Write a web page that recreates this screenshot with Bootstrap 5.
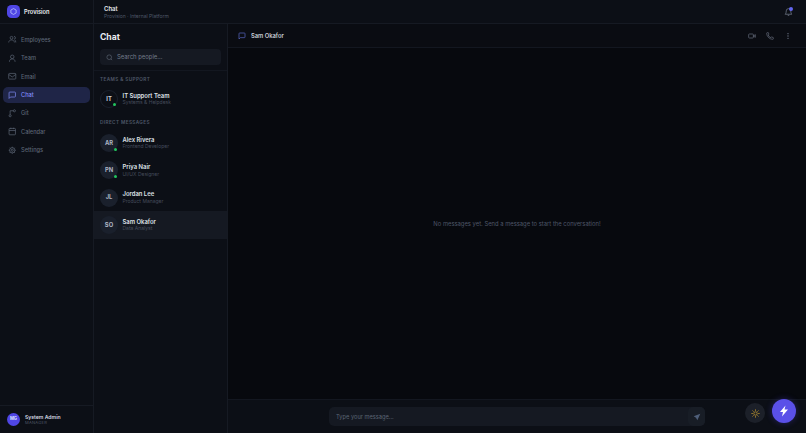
<!DOCTYPE html>
<html lang="en" data-bs-theme="dark">
<head>
<meta charset="utf-8">
<title>Provision Chat</title>
<link href="https://cdn.jsdelivr.net/npm/bootstrap@5.3.0/dist/css/bootstrap.min.css" rel="stylesheet">
<style>
html,body{height:100%;margin:0;background:#0a0d14;font-family:Inter,"Liberation Sans",sans-serif;overflow:hidden}
.shell{height:433px;width:806px}
.rail{width:94px;background:#0c0f16;border-right:1px solid #161a23;flex:none}
.brand{height:24px;padding-left:7px;gap:4px;border-bottom:1px solid #161a23;color:#eef0f5;font-size:5.7px;font-weight:600}
.brand-text{padding-top:1.5px}
.brand-mark{width:13px;height:13px;border-radius:4.5px;background:#4f46e5;color:#c7d2fe}
.rail-nav{padding:7.5px 3px;gap:2px}
.rail-link{height:16.4px;padding-left:5px;gap:4.5px;font-size:5.7px;color:#5b6474;border-radius:5px;text-decoration:none;font-weight:500}
.rail-link.is-on{background:#1f2547;color:#818cf8}
.rail-link svg{width:8.5px;height:8.5px;flex:none}
.rail-label{padding-top:1px}
.rail-foot{height:28px;padding-left:7px;gap:5px;border-top:1px solid #161a23}
.foot-av{width:13px;height:13px;border-radius:50%;background:#4f46e5;color:#dfe3ff;font-size:4.2px;font-weight:700}
.foot-name{font-size:5.1px;font-weight:600;color:#d5d8e0;line-height:6.5px;padding-top:1px}
.foot-role{font-size:4.1px;color:#505868;letter-spacing:.25px;line-height:6px}
.topbar{height:24px;background:#0c0f16;border-bottom:1px solid #161a23;padding:1px 13px 0 10px;flex:none}
.top-title{font-size:6px;font-weight:600;color:#e5e7ec;line-height:8px}
.top-sub{font-size:5px;color:#4f5869;line-height:7px}
.bell-wrap{width:9px;height:10px}
.bell-dot{position:absolute;top:0;right:0;width:4px;height:4px;border-radius:50%;background:#6366f1}
.people{width:134px;flex:none;background:#0c0f16;border-right:1px solid #161a23}
.people-head{padding:9px 6px 0;height:47px;border-bottom:1px solid #131720}
.people-title{font-size:8.6px;font-weight:700;color:#e8eaf0;line-height:9px;margin-bottom:7px}
.search-box{height:16px;background:#151922;border-radius:4px;padding-left:6px;gap:4px;font-size:5.9px;color:#737b8b}
.search-text{padding-top:1.5px}
.group-label{font-size:4.7px;font-weight:600;letter-spacing:.38px;color:#4f5869;padding:0 6px;line-height:6px}
.group-first{margin-top:4.5px;margin-bottom:4px}
.group-next{margin-top:6.7px;margin-bottom:4px}
.person{height:27.3px;padding-left:6px;gap:4.5px}
.person.is-on{background:#151922}
.person-av{width:18px;height:18px;border-radius:50%;background:#1a202c;color:#adb5c3;font-size:5.8px;font-weight:700;flex:none}
.person-av.ring{background:#0c0f16;border:1px solid #1a202c;color:#cbd0da}
.live{position:absolute;right:1.5px;bottom:1.5px;width:3px;height:3px;border-radius:50%;background:#22c55e}
.person-name{font-size:5.9px;font-weight:600;color:#dfe2e8;line-height:7.5px}
.person-role{font-size:5px;color:#454c5b;line-height:7px}
.convo{background:#07090e;min-width:0}
.convo-head{height:24px;padding:1px 14px 0 10px;border-bottom:1px solid #131720;background:#0a0c12;flex:none}
.convo-title{gap:5px}
.convo-name{font-size:5.8px;font-weight:600;color:#c9cdd6;padding-top:1px}
.convo-tools{gap:10px}
.empty-note{font-size:5.85px;color:#4e5668;padding-top:2px}
.composer{height:34px;border-top:1px solid #131720;background:#0c0f16;flex:none}
.msg-box{width:376px;height:19px;background:#151922;border-radius:5px;padding-left:7px;font-size:5.7px;color:#5b6474}
.msg-hint{padding-top:1.5px}
.send-btn{width:17px;height:19px;border-radius:5px;background:#181d26}
.theme-fab{position:absolute;right:41px;bottom:10px;width:20px;height:20px;border-radius:50%;background:#1c2029}
.bolt-fab{position:absolute;right:10px;bottom:10px;width:24px;height:24px;border-radius:50%;background:#5a50e8;box-shadow:0 0 6px rgba(80,70,229,.35)}
</style>
</head>
<body>
<div class="shell d-flex">
  <aside class="rail d-flex flex-column">
    <div class="brand d-flex align-items-center">
      <span class="brand-mark d-flex align-items-center justify-content-center"><svg width="7" height="7" viewBox="0 0 24 24" fill="none" stroke="currentColor" stroke-width="2.4"><path d="M12 2 21 7v10l-9 5-9-5V7z"/></svg></span>
      <span class="brand-text">Provision</span>
    </div>
    <nav class="rail-nav d-flex flex-column flex-grow-1">
      <a class="rail-link d-flex align-items-center" href="#"><svg viewBox="0 0 24 24" fill="none" stroke="currentColor" stroke-width="2"><circle cx="10" cy="8" r="4"/><path d="M2 21c0-4 3.500-7 8-7s8 3 8 7M17 4a4 4 0 0 1 0 8M19 14c2 1 3 4 3 7"/></svg><span class="rail-label">Employees</span></a>
      <a class="rail-link d-flex align-items-center" href="#"><svg viewBox="0 0 24 24" fill="none" stroke="currentColor" stroke-width="2"><circle cx="12" cy="8" r="5"/><path d="M4 22c0-5 3-8 8-8s8 3 8 8"/></svg><span class="rail-label">Team</span></a>
      <a class="rail-link d-flex align-items-center" href="#"><svg viewBox="0 0 24 24" fill="none" stroke="currentColor" stroke-width="2"><rect x="2" y="4" width="20" height="16" rx="2"/><path d="m2 7 10 7 10-7"/></svg><span class="rail-label">Email</span></a>
      <a class="rail-link is-on d-flex align-items-center" href="#"><svg viewBox="0 0 24 24" fill="none" stroke="currentColor" stroke-width="2"><path d="M21 15a2 2 0 0 1-2 2H7l-4 4V5a2 2 0 0 1 2-2h14a2 2 0 0 1 2 2z"/></svg><span class="rail-label">Chat</span></a>
      <a class="rail-link d-flex align-items-center" href="#"><svg viewBox="0 0 24 24" fill="none" stroke="currentColor" stroke-width="2"><circle cx="6" cy="19" r="3"/><circle cx="18" cy="5" r="3"/><path d="M6 16V5h9"/></svg><span class="rail-label">Git</span></a>
      <a class="rail-link d-flex align-items-center" href="#"><svg viewBox="0 0 24 24" fill="none" stroke="currentColor" stroke-width="2"><rect x="3" y="4" width="18" height="18" rx="2"/><path d="M3 10h18M8 2v4M16 2v4"/></svg><span class="rail-label">Calendar</span></a>
      <a class="rail-link d-flex align-items-center" href="#"><svg viewBox="0 0 24 24" fill="none" stroke="currentColor" stroke-width="2"><circle cx="12" cy="12" r="3"/><path d="M12 2v3M12 19v3M2 12h3M19 12h3M5 5l2 2M17 17l2 2M5 19l2-2M17 7l2-2"/><circle cx="12" cy="12" r="7.500"/></svg><span class="rail-label">Settings</span></a>
    </nav>
    <div class="rail-foot d-flex align-items-center">
      <span class="foot-av d-flex align-items-center justify-content-center">MG</span>
      <div><div class="foot-name">System Admin</div><div class="foot-role">MANAGER</div></div>
    </div>
  </aside>
  <div class="d-flex flex-column flex-grow-1" style="min-width:0">
    <header class="topbar d-flex align-items-center justify-content-between">
      <div><div class="top-title">Chat</div><div class="top-sub">Provision · Internal Platform</div></div>
      <span class="bell-wrap position-relative d-block"><svg width="9" height="10" viewBox="0 0 24 24" fill="none" stroke="#737b8b" stroke-width="2" class="d-block"><path d="M18 9a6 6 0 0 0-12 0c0 7-3 9-3 9h18s-3-2-3-9M10 21h4"/></svg><span class="bell-dot"></span></span>
    </header>
    <div class="d-flex flex-grow-1" style="min-height:0">
      <section class="people d-flex flex-column">
        <div class="people-head">
          <div class="people-title">Chat</div>
          <div class="search-box d-flex align-items-center"><svg width="7" height="7" viewBox="0 0 24 24" fill="none" stroke="#666e7d" stroke-width="2"><circle cx="11" cy="11" r="8"/><path d="m21 21-4.300-4.300"/></svg><span class="search-text">Search people...</span></div>
        </div>
        <div class="group-label group-first">TEAMS &amp; SUPPORT</div>
        <div class="person d-flex align-items-center">
          <span class="person-av ring position-relative d-flex align-items-center justify-content-center">IT<i class="live"></i></span>
          <div><div class="person-name">IT Support Team</div><div class="person-role">Systems &amp; Helpdesk</div></div>
        </div>
        <div class="group-label group-next">DIRECT MESSAGES</div>
        <div class="person d-flex align-items-center">
          <span class="person-av position-relative d-flex align-items-center justify-content-center">AR<i class="live"></i></span>
          <div><div class="person-name">Alex Rivera</div><div class="person-role">Frontend Developer</div></div>
        </div>
        <div class="person d-flex align-items-center">
          <span class="person-av position-relative d-flex align-items-center justify-content-center">PN<i class="live"></i></span>
          <div><div class="person-name">Priya Nair</div><div class="person-role">UI/UX Designer</div></div>
        </div>
        <div class="person d-flex align-items-center">
          <span class="person-av position-relative d-flex align-items-center justify-content-center">JL</span>
          <div><div class="person-name">Jordan Lee</div><div class="person-role">Product Manager</div></div>
        </div>
        <div class="person is-on d-flex align-items-center">
          <span class="person-av position-relative d-flex align-items-center justify-content-center">SO</span>
          <div><div class="person-name">Sam Okafor</div><div class="person-role">Data Analyst</div></div>
        </div>
      </section>
      <main class="convo d-flex flex-column flex-grow-1">
        <div class="convo-head d-flex align-items-center justify-content-between">
          <div class="convo-title d-flex align-items-center"><svg width="8" height="8" viewBox="0 0 24 24" fill="none" stroke="#5f6ccf" stroke-width="2"><path d="M21 15a2 2 0 0 1-2 2H7l-4 4V5a2 2 0 0 1 2-2h14a2 2 0 0 1 2 2z"/></svg><span class="convo-name">Sam Okafor</span></div>
          <div class="convo-tools d-flex align-items-center">
            <svg width="8" height="8" viewBox="0 0 24 24" fill="none" stroke="#6b7383" stroke-width="2"><rect x="2" y="6" width="14" height="12" rx="2"/><path d="m22 8-6 4 6 4z"/></svg>
            <svg width="8" height="8" viewBox="0 0 24 24" fill="none" stroke="#6b7383" stroke-width="2"><path d="M22 17v3a2 2 0 0 1-2 2A19 19 0 0 1 2 4a2 2 0 0 1 2-2h3l2 5-2.500 2a14 14 0 0 0 8 8l2-2.500z"/></svg>
            <svg width="8" height="8" viewBox="0 0 24 24" fill="#6b7383"><circle cx="12" cy="5" r="2"/><circle cx="12" cy="12" r="2"/><circle cx="12" cy="19" r="2"/></svg>
          </div>
        </div>
        <div class="flex-grow-1 d-flex align-items-center justify-content-center empty-note">No messages yet. Send a message to start the conversation!</div>
        <div class="composer d-flex align-items-center justify-content-center">
          <div class="msg-box d-flex align-items-center justify-content-between"><span class="msg-hint">Type your message...</span><span class="send-btn d-flex align-items-center justify-content-center"><svg width="8" height="8" viewBox="0 0 24 24" fill="#4f5f7a"><path d="M22 2 2 10l7 4 4 8z"/></svg></span></div>
        </div>
      </main>
    </div>
  </div>
</div>
<span class="theme-fab d-flex align-items-center justify-content-center"><svg width="9" height="9" viewBox="0 0 24 24" fill="none" stroke="#a8862e" stroke-width="2.4"><circle cx="12" cy="12" r="4.500"/><path d="M12 1v4M12 19v4M1 12h4M19 12h4M4 4l3 3M17 17l3 3M4 20l3-3M17 7l3-3"/></svg></span>
<span class="bolt-fab d-flex align-items-center justify-content-center"><svg width="12" height="12" viewBox="0 0 24 24" fill="#fff"><path d="M15 1 4 14h6l-2 9 12-14h-7z"/></svg></span>
<script src="https://cdn.jsdelivr.net/npm/bootstrap@5.3.0/dist/js/bootstrap.bundle.min.js"></script>
</body>
</html>
